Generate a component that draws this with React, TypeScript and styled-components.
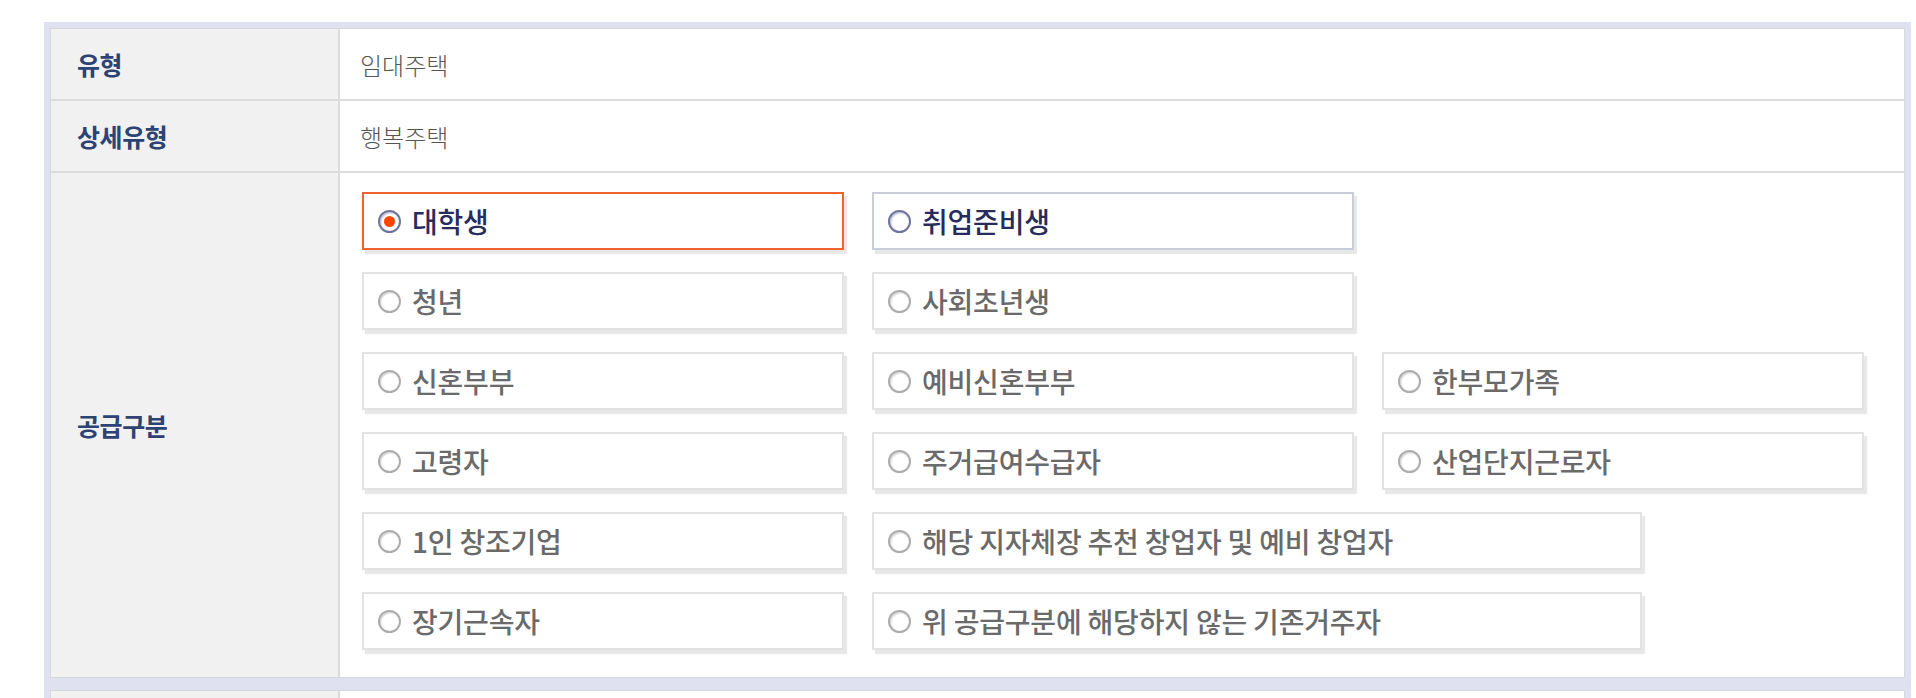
import React from "react";
import styled, { createGlobalStyle, css } from "styled-components";

const GlobalStyle = createGlobalStyle`
  html, body {
    margin: 0;
    padding: 0;
    background: #ffffff;
    font-family: "Noto Sans CJK KR", "Noto Sans", "Liberation Sans", sans-serif;
  }
  * { box-sizing: border-box; }
`;

const Page = styled.div`
  padding: 22px 5px 0 44px;
  height: 698px;
  overflow: hidden;
`;

const Panel = styled.div`
  border: 6px solid #dfe1f1;
`;

const Inner = styled.div`
  border: 1px solid #d7d7d7;
`;

const Row = styled.div<{ $last?: boolean; $h?: number }>`
  display: grid;
  grid-template-columns: 289px 1fr;
  ${(p) => (p.$h ? `min-height: ${p.$h}px;` : "")}
  ${(p) => (p.$last ? "" : "border-bottom: 2px solid #dcdcdc;")}
`;

const Th = styled.div`
  background: #f1f1f1;
  border-right: 2px solid #dcdcdc;
  display: flex;
  align-items: center;
  padding-left: 26px;
  font-size: 25px;
  font-weight: 700;
  color: #2d4374;
  letter-spacing: -0.4px;
`;

const Td = styled.div`
  display: flex;
  align-items: center;
  padding-left: 20px;
  font-size: 24px;
  font-weight: 300;
  color: #555555;
  background: #ffffff;
`;

const OptionArea = styled.div`
  display: flex;
  flex-direction: column;
  gap: 22px;
  padding: 19px 20px 27px 22px;
  background: #ffffff;
`;

const OptionRow = styled.div`
  display: flex;
  gap: 28px;
`;

type State = "checked" | "focus" | "normal";

const OptionBox = styled.label<{ $state: State; $wide?: boolean }>`
  width: ${(p) => (p.$wide ? 770 : 482)}px;
  height: 58px;
  display: flex;
  align-items: center;
  gap: 11px;
  padding-left: 14px;
  background: #ffffff;
  border: 2px solid #e2e2e2;
  box-shadow: 3px 4px 1px rgba(0, 0, 0, 0.09);
  font-size: 28px;
  font-weight: 500;
  color: #6a6a6a;
  letter-spacing: -0.2px;
  cursor: pointer;
  ${(p) =>
    p.$state === "checked" &&
    css`
      border-color: #f2622f;
      color: #272c5c;
    `}
  ${(p) =>
    p.$state === "focus" &&
    css`
      border-color: #cbccda;
      color: #272c5c;
    `}
`;

const Radio = styled.span<{ $state: State }>`
  position: relative;
  flex: none;
  width: 23px;
  height: 23px;
  border-radius: 50%;
  background: #ffffff;
  border: 2px solid #acacac;
  box-shadow: inset 1px 1px 2px rgba(0, 0, 0, 0.2);
  ${(p) =>
    p.$state !== "normal" &&
    css`
      border-color: #6f749f;
      box-shadow: inset 1px 1px 2px rgba(40, 44, 92, 0.35);
    `}
  ${(p) =>
    p.$state === "checked" &&
    css`
      &::after {
        content: "";
        position: absolute;
        left: 50%;
        top: 50%;
        width: 11px;
        height: 11px;
        margin: -5.5px 0 0 -5.5px;
        border-radius: 50%;
        background: #ff4300;
      }
    `}
`;

type Opt = { label: string; state?: State; wide?: boolean };

const rows: Opt[][] = [
  [{ label: "대학생", state: "checked" }, { label: "취업준비생", state: "focus" }],
  [{ label: "청년" }, { label: "사회초년생" }],
  [{ label: "신혼부부" }, { label: "예비신혼부부" }, { label: "한부모가족" }],
  [{ label: "고령자" }, { label: "주거급여수급자" }, { label: "산업단지근로자" }],
  [{ label: "1인 창조기업" }, { label: "해당 지자체장 추천 창업자 및 예비 창업자", wide: true }],
  [{ label: "장기근속자" }, { label: "위 공급구분에 해당하지 않는 기존거주자", wide: true }],
];

export default function App() {
  return (
    <>
      <GlobalStyle />
      <Page>
        <Panel>
          <Inner>
            <Row $h={72}>
              <Th>유형</Th>
              <Td>임대주택</Td>
            </Row>
            <Row $h={72}>
              <Th>상세유형</Th>
              <Td>행복주택</Td>
            </Row>
            <Row $last>
              <Th>공급구분</Th>
              <OptionArea>
                {rows.map((r, i) => (
                  <OptionRow key={i}>
                    {r.map((o) => {
                      const st: State = o.state ?? "normal";
                      return (
                        <OptionBox key={o.label} $state={st} $wide={o.wide}>
                          <Radio $state={st} />
                          {o.label}
                        </OptionBox>
                      );
                    })}
                  </OptionRow>
                ))}
              </OptionArea>
            </Row>
          </Inner>
        </Panel>
        <Panel>
          <Inner>
            <Row $h={70} $last>
              <Th>&nbsp;</Th>
              <Td>&nbsp;</Td>
            </Row>
          </Inner>
        </Panel>
      </Page>
    </>
  );
}
